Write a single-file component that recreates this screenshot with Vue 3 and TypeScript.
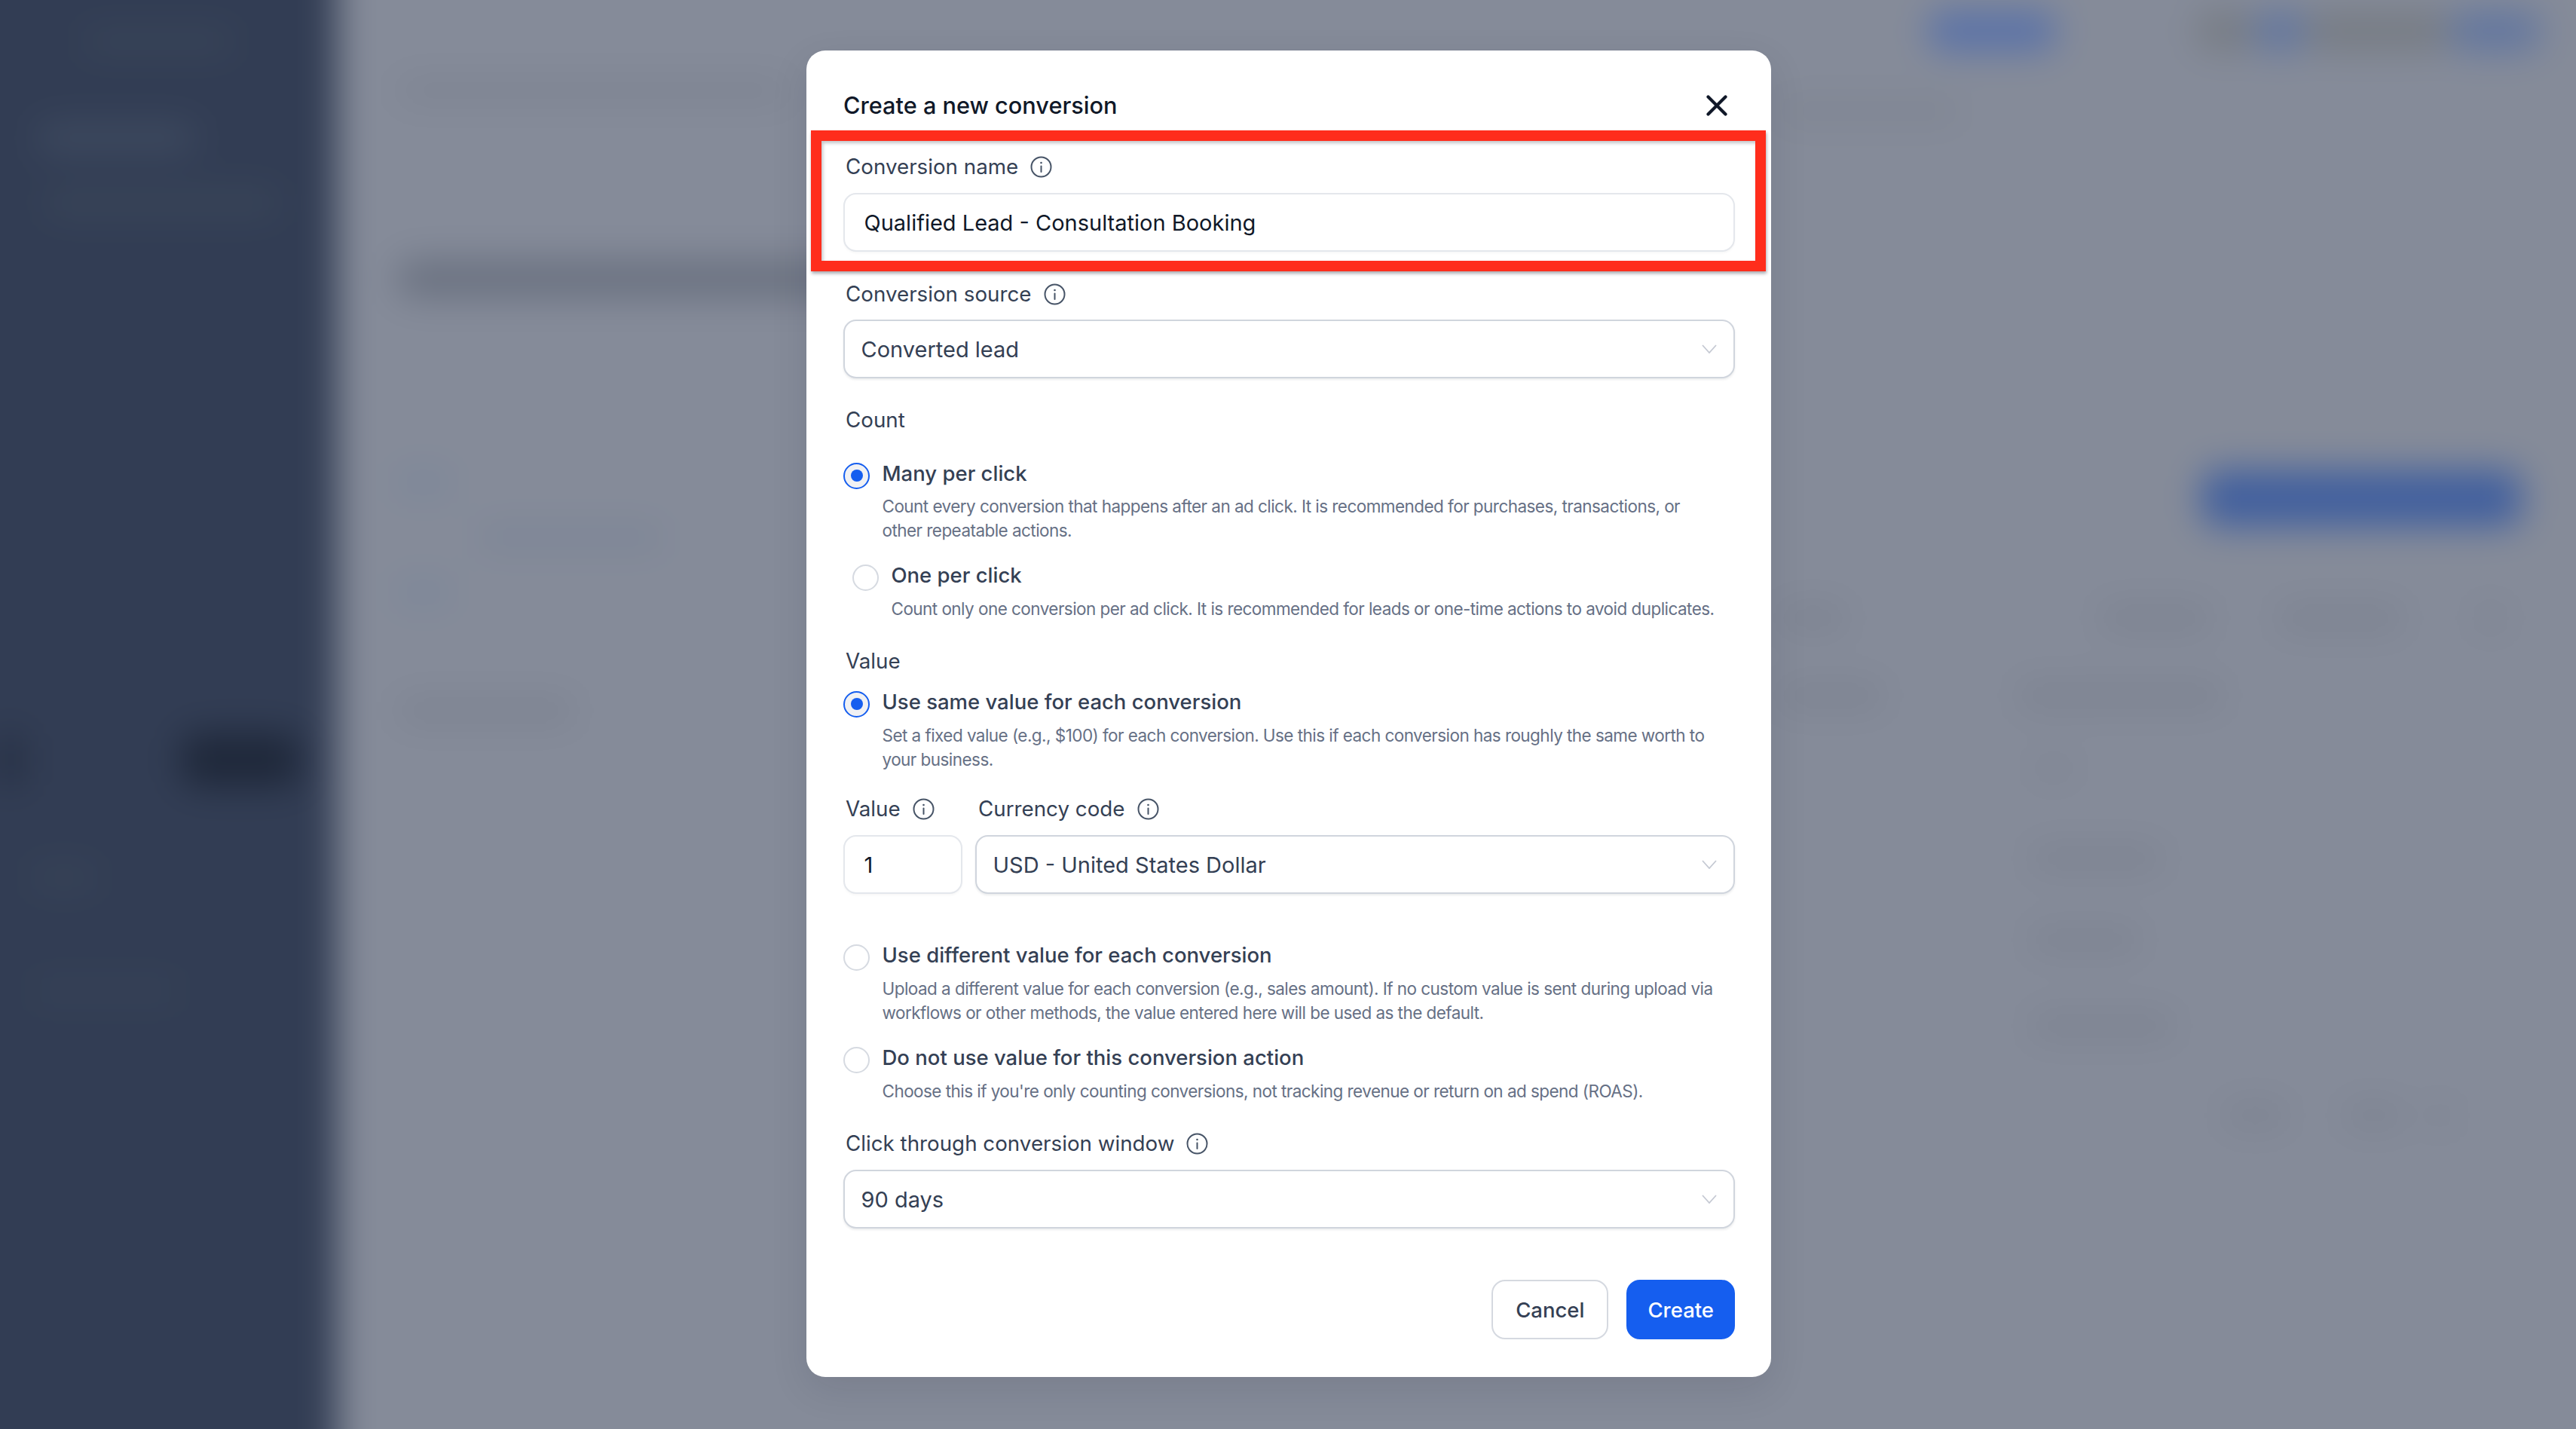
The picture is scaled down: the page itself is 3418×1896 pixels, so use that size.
<script setup lang="ts">
interface Blob { left: number; width: number; color?: string }
interface Row { gap: number; height: number; blobs: Blob[] }

const faint = '#7d8391'

const sidebarRows: Row[] = [
  { gap: 100, height: 30, blobs: [{ left: 170, width: 200, color: '#394558' }] },
  { gap: 95, height: 36, blobs: [{ left: 110, width: 210, color: '#3f4b60' }] },
  { gap: 50, height: 36, blobs: [{ left: 120, width: 310, color: '#394558' }] },
  { gap: 685, height: 72, blobs: [{ left: 60, width: 28, color: '#232c3f' }, { left: 212, width: 160, color: '#1f283a' }] },
  { gap: 105, height: 30, blobs: [{ left: 100, width: 90, color: '#384457' }] },
  { gap: 120, height: 30, blobs: [{ left: 100, width: 200, color: '#364256' }] }
]

const leftRows: Row[] = [
  { gap: 165, height: 30, blobs: [{ left: 0, width: 520, color: '#7d8391' }] },
  { gap: 210, height: 50, blobs: [{ left: 0, width: 650, color: '#6a7180' }] },
  { gap: 230, height: 30, blobs: [{ left: 0, width: 70, color: '#7a8699' }] },
  { gap: 43, height: 30, blobs: [{ left: 108, width: 245, color: '#7c8596' }] },
  { gap: 43, height: 30, blobs: [{ left: 0, width: 70, color: '#7a8699' }] },
  { gap: 124, height: 36, blobs: [{ left: 0, width: 235, color: faint }] }
]

const rightRows: Row[] = [
  {
    gap: 74,
    height: 54,
    blobs: [
      { left: 197, width: 172, color: '#5a72a8' },
      { left: 184, width: 77, color: '#777c84' },
      { left: 0, width: 70, color: '#62769f' },
      { left: 0, width: 190, color: '#777c84' },
      { left: 0, width: 122, color: '#62769f' }
    ]
  },
  { gap: 64, height: 30, blobs: [{ left: 0, width: 240, color: '#7f8592' }] },
  { gap: 461, height: 76, blobs: [{ left: 561, width: 425, color: '#42609e' }] },
  {
    gap: 103,
    height: 36,
    blobs: [
      { left: 0, width: 91, color: faint },
      { left: 334, width: 149, color: faint },
      { left: 87, width: 169, color: faint },
      { left: 94, width: 41, color: faint }
    ]
  },
  {
    gap: 67,
    height: 36,
    blobs: [
      { left: 0, width: 140, color: faint },
      { left: 176, width: 274, color: faint }
    ]
  },
  { gap: 65, height: 26, blobs: [{ left: 340, width: 50, color: faint }] },
  { gap: 90, height: 34, blobs: [{ left: 333, width: 177, color: faint }] },
  { gap: 74, height: 34, blobs: [{ left: 333, width: 147, color: faint }] },
  { gap: 80, height: 34, blobs: [{ left: 333, width: 192, color: faint }] },
  {
    gap: 85,
    height: 34,
    blobs: [
      { left: 590, width: 85, color: faint },
      { left: 75, width: 80, color: faint },
      { left: 35, width: 30, color: faint }
    ]
  }
]

function rowStyle(r: Row) {
  return { marginTop: r.gap + 'px', height: r.height + 'px' }
}
function blobStyle(b: Blob) {
  return { marginLeft: b.left + 'px', width: b.width + 'px', background: b.color }
}

const countOptions = [
  {
    title: 'Many per click',
    text: 'Count every conversion that happens after an ad click. It is recommended for purchases, transactions, or other repeatable actions.',
    checked: true,
    cls: 'opt-many'
  },
  {
    title: 'One per click',
    text: 'Count only one conversion per ad click. It is recommended for leads or one-time actions to avoid duplicates.',
    checked: false,
    cls: 'opt-one'
  }
]
</script>

<template>
  <div class="page">
    <div class="backdrop">
      <aside class="sidebar">
        <div v-for="(r, i) in sidebarRows" :key="i" class="ghost-row" :style="rowStyle(r)">
          <span v-for="(b, j) in r.blobs" :key="j" class="ghost" :style="blobStyle(b)"></span>
        </div>
      </aside>
      <div class="content">
        <div class="col-left">
          <div v-for="(r, i) in leftRows" :key="i" class="ghost-row" :style="rowStyle(r)">
            <span v-for="(b, j) in r.blobs" :key="j" class="ghost" :style="blobStyle(b)"></span>
          </div>
        </div>
        <div class="col-right">
          <div v-for="(r, i) in rightRows" :key="i" class="ghost-row" :style="rowStyle(r)">
            <span v-for="(b, j) in r.blobs" :key="j" class="ghost" :style="blobStyle(b)"></span>
          </div>
        </div>
      </div>
    </div>

    <div class="overlay">
      <section class="modal">
        <header class="modal-head">
          <h2 class="modal-title">Create a new conversion</h2>
          <svg class="close" viewBox="0 0 28 28" width="28" height="28" fill="none">
            <path d="M2.5 2.5 25.5 25.5M25.5 2.5 2.5 25.5" stroke="#101828" stroke-width="4.2" stroke-linecap="round" />
          </svg>
        </header>

        <div class="label label-first">
          <span>Conversion name</span>
          <svg class="info" viewBox="0 0 29 29" fill="none">
            <circle cx="14.5" cy="14.5" r="13" stroke="#475467" stroke-width="2" />
            <path d="M14.5 13.5V21" stroke="#475467" stroke-width="2" stroke-linecap="round" />
            <circle cx="14.5" cy="9" r="1.3" fill="#475467" />
          </svg>
        </div>
        <div class="field field-input field-name">Qualified Lead - Consultation Booking</div>

        <div class="label label-source">
          <span>Conversion source</span>
          <svg class="info" viewBox="0 0 29 29" fill="none">
            <circle cx="14.5" cy="14.5" r="13" stroke="#475467" stroke-width="2" />
            <path d="M14.5 13.5V21" stroke="#475467" stroke-width="2" stroke-linecap="round" />
            <circle cx="14.5" cy="9" r="1.3" fill="#475467" />
          </svg>
        </div>
        <div class="field field-select">
          <span>Converted lead</span>
          <svg class="chev" viewBox="0 0 20 12" fill="none"><path d="M1 1l9 10 9-10" stroke="#c5c9d3" stroke-width="1.8" /></svg>
        </div>

        <div class="label label-count"><span>Count</span></div>
        <div v-for="o in countOptions" :key="o.title" class="option" :class="o.cls">
          <span class="radio" :class="{ on: o.checked }"></span>
          <div>
            <div class="opt-title">{{ o.title }}</div>
            <p class="opt-text">{{ o.text }}</p>
          </div>
        </div>

        <div class="label label-value"><span>Value</span></div>
        <div class="option opt-same">
          <span class="radio on"></span>
          <div>
            <div class="opt-title">Use same value for each conversion</div>
            <p class="opt-text">Set a fixed value (e.g., $100) for each conversion. Use this if each conversion has roughly the same worth to your business.</p>
          </div>
        </div>

        <div class="value-grid">
          <div class="label">
            <span>Value</span>
            <svg class="info" viewBox="0 0 29 29" fill="none">
              <circle cx="14.5" cy="14.5" r="13" stroke="#475467" stroke-width="2" />
              <path d="M14.5 13.5V21" stroke="#475467" stroke-width="2" stroke-linecap="round" />
              <circle cx="14.5" cy="9" r="1.3" fill="#475467" />
            </svg>
          </div>
          <div class="label label-currency">
            <span>Currency code</span>
            <svg class="info" viewBox="0 0 29 29" fill="none">
              <circle cx="14.5" cy="14.5" r="13" stroke="#475467" stroke-width="2" />
              <path d="M14.5 13.5V21" stroke="#475467" stroke-width="2" stroke-linecap="round" />
              <circle cx="14.5" cy="9" r="1.3" fill="#475467" />
            </svg>
          </div>
          <div class="field field-input field-num">1</div>
          <div class="field field-select">
            <span>USD - United States Dollar</span>
            <svg class="chev" viewBox="0 0 20 12" fill="none"><path d="M1 1l9 10 9-10" stroke="#c5c9d3" stroke-width="1.8" /></svg>
          </div>
        </div>

        <div class="option opt-diff">
          <span class="radio"></span>
          <div>
            <div class="opt-title">Use different value for each conversion</div>
            <p class="opt-text">Upload a different value for each conversion (e.g., sales amount). If no custom value is sent during upload via workflows or other methods, the value entered here will be used as the default.</p>
          </div>
        </div>
        <div class="option opt-none">
          <span class="radio"></span>
          <div>
            <div class="opt-title">Do not use value for this conversion action</div>
            <p class="opt-text">Choose this if you're only counting conversions, not tracking revenue or return on ad spend (ROAS).</p>
          </div>
        </div>

        <div class="label label-window">
          <span>Click through conversion window</span>
          <svg class="info" viewBox="0 0 29 29" fill="none">
            <circle cx="14.5" cy="14.5" r="13" stroke="#475467" stroke-width="2" />
            <path d="M14.5 13.5V21" stroke="#475467" stroke-width="2" stroke-linecap="round" />
            <circle cx="14.5" cy="9" r="1.3" fill="#475467" />
          </svg>
        </div>
        <div class="field field-select field-window">
          <span>90 days</span>
          <svg class="chev" viewBox="0 0 20 12" fill="none"><path d="M1 1l9 10 9-10" stroke="#c5c9d3" stroke-width="1.8" /></svg>
        </div>

        <footer class="actions">
          <button class="btn btn-cancel" type="button">Cancel</button>
          <button class="btn btn-create" type="button">Create</button>
        </footer>

        <div class="callout"></div>
      </section>
    </div>
  </div>
</template>

<style scoped>
.page {
  position: relative;
  width: 3418px;
  height: 1896px;
  overflow: hidden;
  background: #858b99;
  font-family: Inter, "Liberation Sans", sans-serif;
}
.backdrop {
  position: absolute;
  inset: -60px;
  display: flex;
  filter: blur(24px);
  background: #858b99;
}
.sidebar {
  width: 507px;
  flex: none;
  background: #323d54;
}
.content {
  flex: 1;
  display: flex;
}
.col-left {
  box-sizing: border-box;
  width: 1913px;
  flex: none;
  padding-left: 80px;
}
.col-right {
  flex: 1;
}
.ghost-row {
  display: flex;
}
.ghost {
  display: block;
  flex: none;
  height: 100%;
  border-radius: 24px;
}
.overlay {
  position: absolute;
  inset: 0 0 2px 2px;
  display: flex;
  align-items: center;
  justify-content: center;
}
.modal {
  position: relative;
  width: 1280px;
  height: 1760px;
  box-sizing: border-box;
  padding: 53px 48px 0 49px;
  background: #fff;
  border-radius: 25px;
  box-shadow: 0 16px 50px rgba(16, 24, 40, 0.1);
}
.modal-head {
  display: flex;
  align-items: center;
  justify-content: space-between;
  height: 40px;
  padding-right: 10px;
}
.modal-title {
  margin: 0;
  font-size: 30.7px;
  font-weight: 500;
  line-height: 40px;
  color: #101828;
}
.close {
  display: block;
}
.label {
  display: flex;
  align-items: center;
  gap: 16px;
  height: 40px;
  padding-left: 3px;
  font-size: 27.75px;
  font-weight: 400;
  color: #344054;
}
.label-first { margin-top: 41px; }
.label-source { margin-top: 36px; }
.label-count { margin-top: 35px; }
.label-value { margin-top: 33px; }
.label-window { margin-top: 33px; }
.label-currency { padding-left: 4px; }
.info {
  width: 29px;
  height: 29px;
  flex: none;
}
.field {
  box-sizing: border-box;
  height: 78px;
  margin-top: 14px;
  border: 2px solid #e4e7ec;
  border-radius: 17px;
  display: flex;
  align-items: center;
  font-size: 29px;
  background: #fff;
}
.field-name,
.field-window {
  margin-top: 15px;
}
.field-input {
  padding-left: 25.5px;
  color: #101828;
  box-shadow: 0 2px 3px rgba(16, 24, 40, 0.03);
}
.field-select {
  justify-content: space-between;
  padding: 0 22px 0 21.5px;
  color: #344054;
  border-color: #d0d5dd;
  box-shadow: 0 2px 3px rgba(16, 24, 40, 0.08);
}
.chev {
  width: 20px;
  height: 12px;
  flex: none;
}
.option {
  display: grid;
  grid-template-columns: 35px 1fr;
  column-gap: 16.5px;
}
.opt-many { margin-top: 31px; }
.opt-one { margin-top: 23px; margin-left: 12px; }
.opt-same { margin-top: 14px; }
.opt-diff { margin-top: 61px; }
.opt-none { margin-top: 23px; }
.radio {
  box-sizing: border-box;
  width: 35px;
  height: 35px;
  margin-top: 5.5px;
  border: 2px solid #d6dae1;
  border-radius: 50%;
  background: #fff;
  display: flex;
  align-items: center;
  justify-content: center;
}
.radio.on {
  border-color: #155eef;
  background: #f0f1f4;
}
.radio.on::after {
  content: "";
  width: 16px;
  height: 16px;
  border-radius: 50%;
  background: #155eef;
}
.opt-title {
  font-size: 27.5px;
  font-weight: 500;
  line-height: 40px;
  color: #344054;
}
.opt-text {
  margin: 9px 0 0;
  max-width: 1106px;
  font-size: 22.5px;
  letter-spacing: -0.55px;
  line-height: 32px;
  color: #667085;
}
.opt-many .opt-text {
  margin-top: 8px;
}
.value-grid {
  display: grid;
  grid-template-columns: 158px 1fr;
  column-gap: 17px;
  margin-top: 29px;
}
.value-grid .field {
  margin-top: 15px;
}
.actions {
  display: flex;
  justify-content: flex-end;
  gap: 24px;
  margin-top: 68px;
}
.btn {
  box-sizing: border-box;
  height: 79px;
  border-radius: 18px;
  font-family: Inter, "Liberation Sans", sans-serif;
  font-size: 27.5px;
  font-weight: 500;
}
.btn-cancel {
  padding: 0 30px;
  border: 2px solid #d5d9e0;
  background: #fff;
  color: #344054;
}
.btn-create {
  padding: 0 26px;
  border: 2px solid #155eef;
  background: #155eef;
  color: #fff;
}
.callout {
  position: absolute;
  left: 6px;
  top: 106px;
  width: 1267px;
  height: 187px;
  box-sizing: border-box;
  border: 14px solid #ff2d1c;
  box-shadow: 1px 3px 4px rgba(16, 24, 40, 0.35), inset 2px 3px 4px rgba(16, 24, 40, 0.25);
  pointer-events: none;
}
</style>
